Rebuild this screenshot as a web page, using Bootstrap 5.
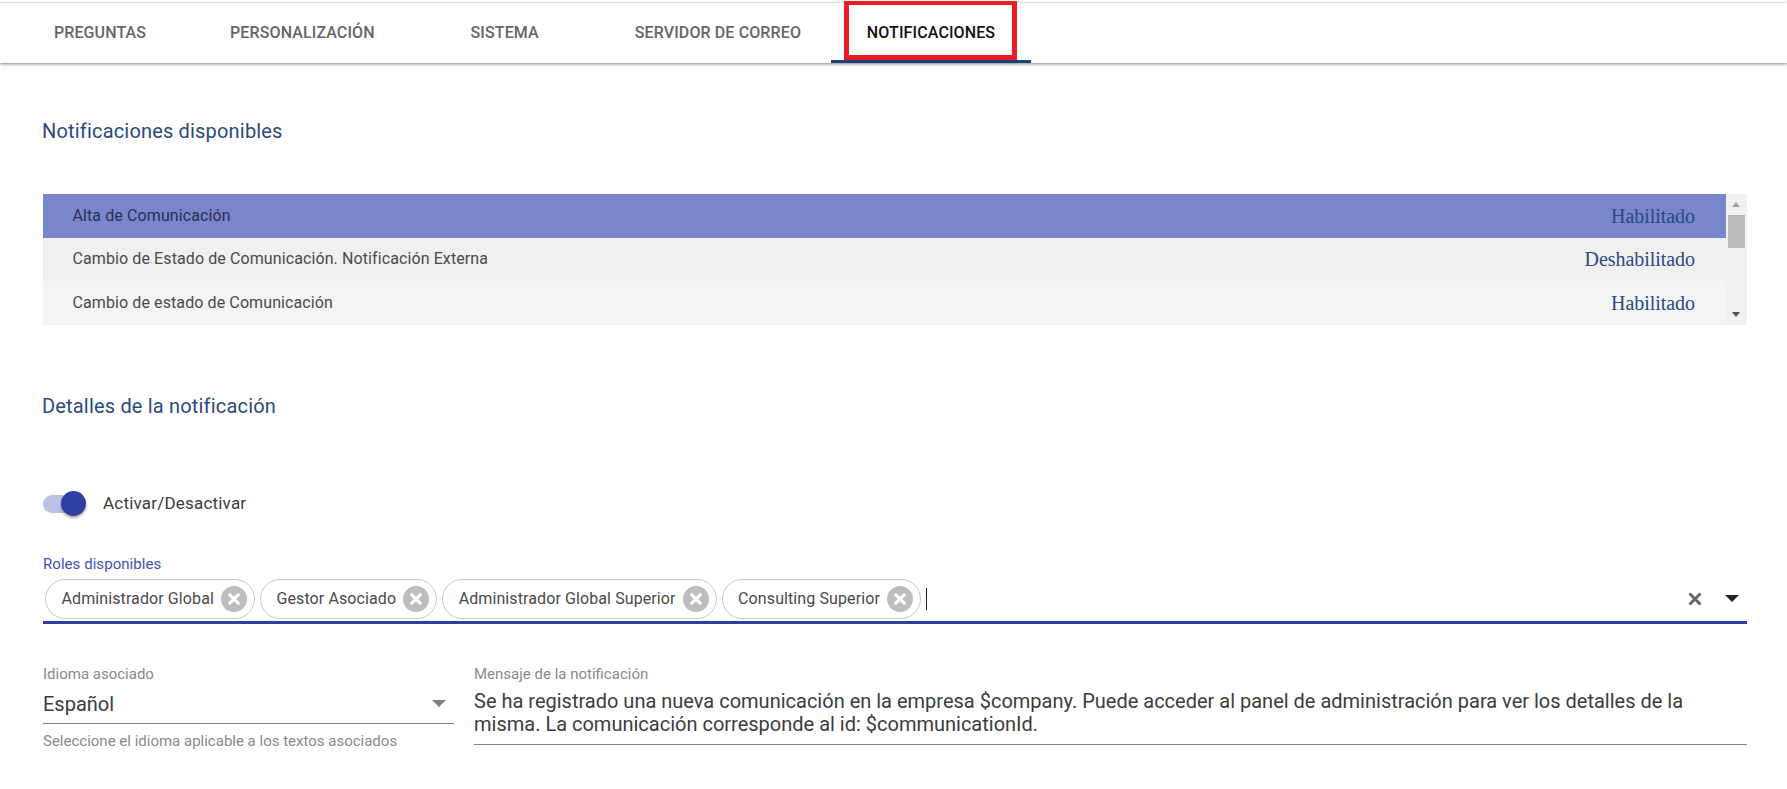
<!DOCTYPE html>
<html lang="es">
<head>
<meta charset="utf-8">
<title>Notificaciones</title>
<link href="https://cdn.jsdelivr.net/npm/bootstrap@5.3.0/dist/css/bootstrap.min.css" rel="stylesheet">
<style>
html,body{height:100%;overflow:hidden;background:#fff}
body{font-family:Roboto,"Liberation Sans",sans-serif;color:#212121}
.tabbar{height:60px;margin-top:3px;box-shadow:0 1px 3px rgba(0,0,0,.5),0 -1px 2px rgba(0,0,0,.08);background:#fff}
.tabitem{min-width:200px;padding:0 30px;height:60px;display:flex;align-items:center;justify-content:center;font-size:16px;font-weight:500;letter-spacing:.12px;color:#666;position:relative;text-transform:uppercase;white-space:nowrap}
.tabitem.is-on{color:#111}
.tabitem.is-on::after{content:"";position:absolute;left:0;right:0;bottom:0;height:3px;background:#1f4179}
.redmark{position:absolute;left:13px;right:14px;top:-2px;bottom:3px;border:5px solid #ed1c24;border-top-width:4px;pointer-events:none}
.pagebody{padding:0 40px 0 43px}
.sectitle{font-size:20px;font-weight:400;letter-spacing:.18px;color:#2a4a80;margin:0 0 0 -1px;line-height:24px}
.sec-one{margin-top:56px}
.notif-box{margin-top:51px;height:131px;background:#f1f1f1;overflow:hidden}
.notif-rows{width:1683px}
.notif-row{height:43.6px;padding:0 31px 0 29.5px;font-size:16px;letter-spacing:.1px;color:#4a4a4a}
.notif-row.row-a{background:#7986cb;color:#2b2f55}
.notif-row.row-b{background:#f0f0f0}
.notif-row.row-c{background:#f4f4f4}
.state-txt{font-family:"Liberation Serif",serif;font-size:20px;color:#2a4a80;letter-spacing:-.05px}
.sbar{width:21px;position:relative}
.sbar-thumb{position:absolute;left:2px;top:21px;width:17px;height:33px;background:#bcbcbc}
.sbar-up,.sbar-down{position:absolute;left:6px;width:0;height:0;border-left:4.5px solid transparent;border-right:4.5px solid transparent}
.sbar-up{top:8px;border-bottom:5px solid #a3a3a3}
.sbar-down{bottom:8px;border-top:5px solid #505050}
.sec-two{margin-top:69px}
.toggle-line{margin-top:72px;height:28px}
.tg-track{width:37px;height:18px;border-radius:9px;background:#bcc2e4;position:relative}
.tg-thumb{position:absolute;right:-6px;top:-4px;width:25px;height:25px;border-radius:50%;background:#303f9f;box-shadow:0 2px 3px rgba(0,0,0,.35)}
.tg-label{margin-left:23px;font-size:17px;letter-spacing:.2px;color:#3c3c3c}
.roles-label{font-size:15px;letter-spacing:.05px;color:#3f51b5;margin-top:37px;line-height:18px}
.roles-field{border-bottom:3px solid #303f9f;margin-top:5px;padding:0 0 2px 2px;height:46px}
.chip-item{height:40px;border:1px solid #c8c8c8;border-radius:20px;padding:0 7px 0 15.5px;font-size:16px;letter-spacing:.1px;color:#4a4a4a;margin-right:5px;background:#fff;white-space:nowrap}
.chip-x{margin-left:7px;flex:none}
.caret-bar{width:1px;height:22px;background:#222;margin-left:0}
.ctl-x{margin-right:23px}
.ctl-caret,.lang-caret{width:0;height:0;border-left:7px solid transparent;border-right:7px solid transparent}
.ctl-caret{border-top:7px solid #222;margin-right:8px}
.lang-caret{border-top:7px solid #808080;margin-right:8px}
.bottom-row{margin-top:40px;gap:20px}
.lang-col{width:411px;flex:none}
.msg-col{flex:1 1 auto;min-width:0}
.field-label{font-size:15px;color:#8a8a8a;line-height:20px}
.lang-val{height:40px;border-bottom:1px solid #858585;font-size:20px;color:#3c3c3c}
.lang-help{font-size:15px;color:#8a8a8a;margin-top:8px;line-height:18px}
.msg-val{font-size:20px;line-height:23px;color:#3c3c3c;border-bottom:1px solid #858585;padding:6px 0 8px}
</style>
</head>
<body>
<nav class="tabbar d-flex">
  <div class="tabitem">Preguntas</div>
  <div class="tabitem">Personalización</div>
  <div class="tabitem">Sistema</div>
  <div class="tabitem">Servidor de correo</div>
  <div class="tabitem is-on">Notificaciones<span class="redmark"></span></div>
</nav>
<main class="pagebody">
  <h2 class="sectitle sec-one">Notificaciones disponibles</h2>
  <div class="notif-box d-flex">
    <div class="notif-rows">
      <div class="notif-row row-a d-flex align-items-center justify-content-between"><span>Alta de Comunicación</span><span class="state-txt">Habilitado</span></div>
      <div class="notif-row row-b d-flex align-items-center justify-content-between"><span>Cambio de Estado de Comunicación. Notificación Externa</span><span class="state-txt">Deshabilitado</span></div>
      <div class="notif-row row-c d-flex align-items-center justify-content-between"><span>Cambio de estado de Comunicación</span><span class="state-txt">Habilitado</span></div>
    </div>
    <div class="sbar"><span class="sbar-up"></span><span class="sbar-thumb"></span><span class="sbar-down"></span></div>
  </div>
  <h2 class="sectitle sec-two">Detalles de la notificación</h2>
  <div class="toggle-line d-flex align-items-center">
    <span class="tg-track"><span class="tg-thumb"></span></span>
    <span class="tg-label">Activar/Desactivar</span>
  </div>
  <div class="roles-label">Roles disponibles</div>
  <div class="roles-field d-flex align-items-center">
    <span class="chip-item d-flex align-items-center">Administrador Global<svg class="chip-x" width="26" height="26" viewBox="0 0 25 25"><circle cx="12.5" cy="12.5" r="12.5" fill="#bdbdbd"/><path d="M7.5 7.5l10 10M17.5 7.5l-10 10" stroke="#fff" stroke-width="3"/></svg></span>
    <span class="chip-item d-flex align-items-center">Gestor Asociado<svg class="chip-x" width="26" height="26" viewBox="0 0 25 25"><circle cx="12.5" cy="12.5" r="12.5" fill="#bdbdbd"/><path d="M7.5 7.5l10 10M17.5 7.5l-10 10" stroke="#fff" stroke-width="3"/></svg></span>
    <span class="chip-item d-flex align-items-center">Administrador Global Superior<svg class="chip-x" width="26" height="26" viewBox="0 0 25 25"><circle cx="12.5" cy="12.5" r="12.5" fill="#bdbdbd"/><path d="M7.5 7.5l10 10M17.5 7.5l-10 10" stroke="#fff" stroke-width="3"/></svg></span>
    <span class="chip-item d-flex align-items-center">Consulting Superior<svg class="chip-x" width="26" height="26" viewBox="0 0 25 25"><circle cx="12.5" cy="12.5" r="12.5" fill="#bdbdbd"/><path d="M7.5 7.5l10 10M17.5 7.5l-10 10" stroke="#fff" stroke-width="3"/></svg></span>
    <span class="caret-bar"></span>
    <svg class="ctl-x ms-auto" width="14" height="14" viewBox="0 0 14 14"><path d="M1.5 1.5l11 11M12.5 1.5l-11 11" stroke="#666" stroke-width="3"/></svg>
    <span class="ctl-caret"></span>
  </div>
  <div class="bottom-row d-flex">
    <div class="lang-col">
      <div class="field-label">Idioma asociado</div>
      <div class="lang-val d-flex align-items-center justify-content-between"><span>Español</span><span class="lang-caret"></span></div>
      <div class="lang-help">Seleccione el idioma aplicable a los textos asociados</div>
    </div>
    <div class="msg-col">
      <div class="field-label">Mensaje de la notificación</div>
      <div class="msg-val">Se ha registrado una nueva comunicación en la empresa $company. Puede acceder al panel de administración para ver los detalles de la misma. La comunicación corresponde al id: $communicationId.</div>
    </div>
  </div>
</main>
<script src="https://cdn.jsdelivr.net/npm/bootstrap@5.3.0/dist/js/bootstrap.bundle.min.js"></script>
</body>
</html>
